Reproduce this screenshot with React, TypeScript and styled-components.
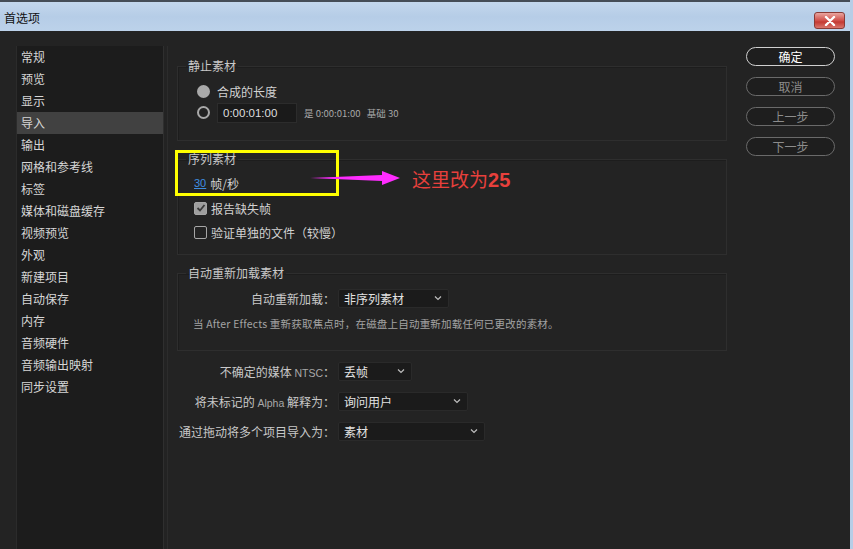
import React from "react";
import styled, { createGlobalStyle } from "styled-components";

const GlobalStyle = createGlobalStyle`
  html, body {
    margin: 0;
    padding: 0;
    background: #232323;
    overflow: hidden;
  }
  * {
    box-sizing: border-box;
  }
`;

const FONT = `"Noto Sans CJK SC", "Liberation Sans", sans-serif`;

const sidebarItems = [
  "常规",
  "预览",
  "显示",
  "导入",
  "输出",
  "网格和参考线",
  "标签",
  "媒体和磁盘缓存",
  "视频预览",
  "外观",
  "新建项目",
  "自动保存",
  "内存",
  "音频硬件",
  "音频输出映射",
  "同步设置",
];

const buttons = [
  { label: "确定", primary: true },
  { label: "取消", primary: false },
  { label: "上一步", primary: false },
  { label: "下一步", primary: false },
];

export default function App() {
  return (
    <>
      <GlobalStyle />
      <Window>
        <TitleBar>
          <Title>首选项</Title>
          <CloseButton>
            <svg width="12" height="10" viewBox="0 0 12 10">
              <path
                d="M2 1 L10 9 M10 1 L2 9"
                stroke="#fff"
                strokeWidth="2.4"
                strokeLinecap="round"
              />
            </svg>
          </CloseButton>
        </TitleBar>
        <Body>
          <Sidebar>
            {sidebarItems.map((item) => (
              <SidebarItem key={item} $active={item === "导入"}>
                {item}
              </SidebarItem>
            ))}
          </Sidebar>
          <Main>
            <Group>
              <Legend>静止素材</Legend>
              <GroupInner $pt={7} $pb={17}>
                <Row>
                  <Radio $checked />
                  <RowText>合成的长度</RowText>
                </Row>
                <Row>
                  <Radio />
                  <TimeInput>0:00:01:00</TimeInput>
                  <SmallNote>是 0:00:01:00&nbsp;&nbsp;&nbsp;基础 30</SmallNote>
                </Row>
              </GroupInner>
            </Group>

            <Group>
              <Legend>序列素材</Legend>
              <GroupInner $pt={7} $pb={10}>
                <FpsRow>
                  <FpsLink>30</FpsLink>
                  <RowText>帧/秒</RowText>
                </FpsRow>
                <CheckRow $first>
                  <CheckBox $checked>
                    <svg width="10" height="10" viewBox="0 0 10 10">
                      <path
                        d="M1.5 5 L4 7.5 L8.5 2"
                        stroke="#3a3a3a"
                        strokeWidth="1.8"
                        fill="none"
                      />
                    </svg>
                  </CheckBox>
                  <RowText>报告缺失帧</RowText>
                </CheckRow>
                <CheckRow>
                  <CheckBox />
                  <RowText>验证单独的文件（较慢）</RowText>
                </CheckRow>
              </GroupInner>
            </Group>

            <Group>
              <Legend>自动重新加载素材</Legend>
              <GroupInner $pt={7} $pb={19} $pl={0}>
                <FieldRow $label={157}>
                  <FieldLabel>自动重新加载：</FieldLabel>
                  <Select $width={111}>
                    <span>非序列素材</span>
                    <Chevron />
                  </Select>
                </FieldRow>
                <Description>
                  当 After Effects 重新获取焦点时，在磁盘上自动重新加载任何已更改的素材。
                </Description>
              </GroupInner>
            </Group>

            <Fields>
              <FieldRow $label={158}>
                <FieldLabel>
                  不确定的媒体 <Latin>NTSC</Latin>：
                </FieldLabel>
                <Select $width={74}>
                  <span>丢帧</span>
                  <Chevron />
                </Select>
              </FieldRow>
              <FieldRow $label={158}>
                <FieldLabel>
                  将未标记的 <Latin>Alpha</Latin> 解释为：
                </FieldLabel>
                <Select $width={130}>
                  <span>询问用户</span>
                  <Chevron />
                </Select>
              </FieldRow>
              <FieldRow $label={158}>
                <FieldLabel>通过拖动将多个项目导入为：</FieldLabel>
                <Select $width={147}>
                  <span>素材</span>
                  <Chevron />
                </Select>
              </FieldRow>
            </Fields>

            <Highlight />
            <Arrow width="92" height="16" viewBox="0 0 92 16">
              <polygon points="0,8 72,5 72,1 90,8 72,15 72,11" fill="#ff2cff" />
            </Arrow>
            <Annotation>
              这里改为<b>25</b>
            </Annotation>
          </Main>
          <ButtonColumn>
            {buttons.map((b) => (
              <PillButton key={b.label} $primary={b.primary}>
                {b.label}
              </PillButton>
            ))}
          </ButtonColumn>
        </Body>
      </Window>
    </>
  );
}

function Chevron() {
  return (
    <svg width="8" height="6" viewBox="0 0 8 6">
      <path d="M1 1.5 L4 4.5 L7 1.5" stroke="#bdbdbd" strokeWidth="1.2" fill="none" />
    </svg>
  );
}

const Window = styled.div`
  width: 853px;
  height: 549px;
  display: flex;
  flex-direction: column;
  font-family: ${FONT};
  background: #232323;
  border-right: 3px solid #b7cde6;
`;

const TitleBar = styled.div`
  height: 31px;
  flex-shrink: 0;
  display: flex;
  align-items: center;
  justify-content: space-between;
  padding: 2px 4px 0 4px;
  border-top: 2px solid #454d57;
  background: linear-gradient(#c3d7ed, #b6cde7 50%, #bcd2ea);
`;

const Title = styled.div`
  font-size: 12px;
  color: #111;
`;

const CloseButton = styled.div`
  width: 31px;
  height: 17px;
  margin-right: 1px;
  margin-top: 6px;
  display: flex;
  align-items: center;
  justify-content: center;
  border-radius: 3px;
  border: 1px solid #8a3b36;
  background: linear-gradient(#e9a6a0, #d0504a 50%, #c43a33 60%, #d9766d);
`;

const Body = styled.div`
  flex: 1;
  display: flex;
  align-items: flex-start;
  padding: 15px 0 0 16px;
  min-height: 0;
`;

const Sidebar = styled.div`
  width: 148px;
  height: 510px;
  flex-shrink: 0;
  display: flex;
  flex-direction: column;
  background: #1c1c1c;
  border-left: 1px solid #2b2b2b;
  border-right: 1px solid #2f2f2f;
  box-shadow: 3px 0 0 #232323, 4px 0 0 #2c2c2c;
`;

const SidebarItem = styled.div<{ $active?: boolean }>`
  height: 22px;
  line-height: 22px;
  padding-left: 4px;
  font-size: 12px;
  color: #d6d6d6;
  background: ${(p) => (p.$active ? "#414141" : "transparent")};
`;

const Main = styled.div`
  position: relative;
  width: 550px;
  margin-left: 13px;
  padding-top: 12px;
  display: flex;
  flex-direction: column;
`;

const Group = styled.fieldset`
  margin: 0 0 10px 0;
  padding: 0;
  border: 1px solid #2e2e2e;
  box-shadow: inset 1px 1px 0 #1d1d1d;
  min-width: 0;
`;

const Legend = styled.legend`
  margin-left: 8px;
  padding: 0 2px;
  font-size: 12px;
  line-height: 16px;
  color: #c9c9c9;
`;

const GroupInner = styled.div<{ $pt: number; $pb: number; $pl?: number }>`
  display: flex;
  flex-direction: column;
  padding: ${(p) => p.$pt}px 0 ${(p) => p.$pb}px ${(p) => p.$pl ?? 19}px;
`;

const Row = styled.div`
  height: 21px;
  display: flex;
  align-items: center;
  gap: 4px;
`;

const Radio = styled.span<{ $checked?: boolean }>`
  width: 13px;
  height: 13px;
  border-radius: 50%;
  flex-shrink: 0;
  margin-right: 3px;
  background: ${(p) => (p.$checked ? "#a9a9a9" : "transparent")};
  border: 2px solid #a9a9a9;
`;

const RowText = styled.span`
  font-size: 12px;
  color: #d2d2d2;
`;

const TimeInput = styled.span`
  width: 80px;
  height: 20px;
  display: flex;
  align-items: center;
  padding-left: 5px;
  font-family: "Liberation Sans", sans-serif;
  font-size: 11.5px;
  color: #dedede;
  background: #1a1a1a;
  border: 1px solid #2c2c2c;
`;

const SmallNote = styled.span`
  margin-left: 3px;
  font-size: 9.5px;
  color: #a8a8a8;
`;

const FpsRow = styled.div`
  height: 18px;
  display: flex;
  align-items: center;
  gap: 4px;
  margin-left: -3px;
`;

const FpsLink = styled.span`
  font-family: "Liberation Sans", sans-serif;
  font-size: 11px;
  color: #3f8ee0;
  text-decoration: underline;
`;

const CheckRow = styled.div<{ $first?: boolean }>`
  height: 24px;
  display: flex;
  align-items: center;
  gap: 4px;
  margin-left: -3px;
  margin-top: ${(p) => (p.$first ? 4 : 0)}px;
`;

const CheckBox = styled.span<{ $checked?: boolean }>`
  width: 13px;
  height: 13px;
  flex-shrink: 0;
  display: flex;
  align-items: center;
  justify-content: center;
  background: ${(p) => (p.$checked ? "#9e9e9e" : "transparent")};
  border: 1.5px solid #a6a6a6;
  border-radius: 2px;
`;

const FieldRow = styled.div<{ $label: number }>`
  display: grid;
  grid-template-columns: ${(p) => p.$label}px auto;
  align-items: center;
  column-gap: 3px;
  height: 20px;
`;

const FieldLabel = styled.span`
  text-align: right;
  font-size: 12px;
  color: #c8c8c8;
  white-space: nowrap;
`;

const Latin = styled.span`
  font-family: "Liberation Sans", sans-serif;
  font-size: 10.5px;
  color: #a9a9a9;
`;

const Select = styled.div<{ $width: number }>`
  width: ${(p) => p.$width}px;
  height: 19px;
  display: flex;
  align-items: center;
  justify-content: space-between;
  padding: 0 6px 0 5px;
  font-size: 12px;
  color: #e2e2e2;
  background: #1b1b1b;
  border: 1px solid #2a2a2a;
  border-radius: 2px;
`;

const Description = styled.div`
  margin-top: 8px;
  padding-left: 15px;
  font-size: 10.5px;
  letter-spacing: 0.2px;
  color: #a3a3a3;
`;

const Fields = styled.div`
  display: flex;
  flex-direction: column;
  gap: 10px;
  margin-top: 0px;
`;

const Highlight = styled.div`
  position: absolute;
  left: -2px;
  top: 104px;
  width: 164px;
  height: 46px;
  border: 3px solid #ffff00;
`;

const Arrow = styled.svg`
  position: absolute;
  left: 133px;
  top: 124px;
`;

const Annotation = styled.div`
  position: absolute;
  left: 235px;
  top: 119px;
  font-size: 19px;
  color: #e8403c;
  b {
    font-family: "Liberation Sans", sans-serif;
    font-weight: bold;
    font-size: 20px;
  }
`;

const ButtonColumn = styled.div`
  margin-left: 19px;
  padding-top: 1px;
  display: flex;
  flex-direction: column;
  gap: 11px;
`;

const PillButton = styled.div<{ $primary?: boolean }>`
  width: 89px;
  height: 19px;
  display: flex;
  align-items: center;
  justify-content: center;
  border-radius: 10px;
  font-size: 12px;
  color: ${(p) => (p.$primary ? "#ffffff" : "#8c8c8c")};
  border: 1px solid ${(p) => (p.$primary ? "#d0d0d0" : "#6a6a6a")};
  background: #1e1e1e;
`;
